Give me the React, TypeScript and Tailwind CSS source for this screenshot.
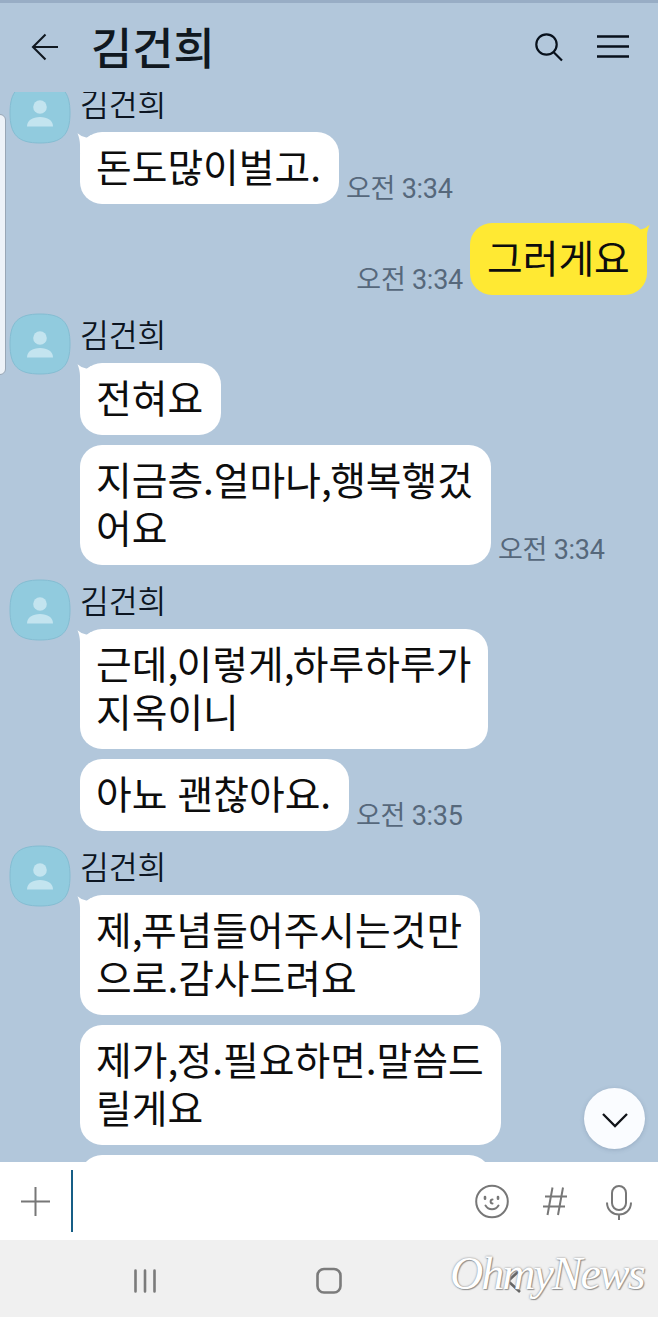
import type { ReactNode } from "react";

function Avatar() {
  return (
    <svg className="h-[62px] w-[62px] shrink-0" viewBox="0 0 62 62">
      <path
        d="M31 1C53 1 61 9 61 31S53 61 31 61 1 53 1 31 9 1 31 1Z"
        fill="#91cbde"
        stroke="#84bdd2"
        strokeWidth="1"
      />
      <circle cx="31" cy="25" r="6.8" fill="#c3e4ef" />
      <path d="M18 44.500c0-6 5.500-9.500 13-9.500s13 3.500 13 9.500Z" fill="#c3e4ef" />
    </svg>
  );
}

function Tail({ mine }: { mine?: boolean }) {
  return mine ? (
    <svg className="absolute -right-[3px] top-[1px] h-[20px] w-[24px]" viewBox="0 0 24 20">
      <path d="M10 3 13.500 5.200Q14.500 5.900 15.500 5.300Q20 4.300 23.500.8C22 5 21 8 21 12V20H4Z" fill="#ffe933" />
    </svg>
  ) : (
    <svg className="absolute -left-[3px] top-[1px] h-[20px] w-[24px]" viewBox="0 0 24 20">
      <path d="M14 2 10.500 4.200Q9.500 4.900 8.500 4.300Q4 3.500.500.300C2 4 3 8 3 12V20H20Z" fill="#fff" />
    </svg>
  );
}

type BubbleProps = {
  lines: string[];
  width: string;
  time?: string;
  tail?: boolean;
};

function Time({ children }: { children: ReactNode }) {
  return (
    <span className="mb-[-1px] whitespace-pre text-[27px] leading-[32px] font-normal tracking-[-0.250px] text-[#56687b] font-[Roboto,'Noto_Sans_CJK_KR',sans-serif]">
      {children}
    </span>
  );
}

function Line({ text }: { text: string }) {
  return (
    <p className="relative whitespace-pre text-[38.800px] leading-[47.500px] [word-spacing:1.500px]">
      {text.split(/(,)/).map((part, i) =>
        part === "," ? (
          <span key={i} className="tracking-[-1.600px]">
            ,
          </span>
        ) : (
          part
        ),
      )}
    </p>
  );
}

function Bubble({ lines, width, time, tail }: BubbleProps) {
  return (
    <div className="flex items-end gap-[7px]">
      <div
        className={`relative rounded-[22px] bg-white pt-[10px] pl-[16px] ${width} ${
          lines.length > 1 ? "h-[120px]" : "h-[72px]"
        }`}
      >
        {tail && <Tail />}
        {lines.map((line) => (
          <Line key={line} text={line} />
        ))}
      </div>
      {time && <Time>{time}</Time>}
    </div>
  );
}

function Group({ bubbles, className }: { bubbles: BubbleProps[]; className: string }) {
  return (
    <section className={`flex gap-[9px] pl-[9px] ${className}`}>
      <Avatar />
      <div className="flex flex-col gap-[10px]">
        <h2 className="-mb-[10px] h-[50px] text-[31.300px] leading-[42px] font-[350] text-[#0c1522]">김건희</h2>
        {bubbles.map((b, i) => (
          <Bubble key={i} {...b} tail={i === 0} />
        ))}
      </div>
    </section>
  );
}

export default function App() {
  return (
    <div className="flex h-[1317px] w-[658px] flex-col overflow-hidden bg-[#b2c7db] text-[#0d0d0d] font-['Noto_Sans_CJK_KR',sans-serif]">
      <header className="flex h-[92px] shrink-0 items-center border-t-[3px] border-[#98adc5] pb-[2px] pl-[31px] pr-[28px]">
        <svg className="h-[28px] w-[28px]" viewBox="0 0 28 28" fill="none" stroke="#101820" strokeWidth="2.100">
          <path d="M27 14H2M14.500 1.500 2 14l12.500 12.500" />
        </svg>
        <h1 className="-mt-[1px] ml-[32px] flex-1 text-[44.800px] leading-[60px] font-medium text-[#101820]">김건희</h1>
        <svg className="h-[30px] w-[30px]" viewBox="0 0 30 30" fill="none" stroke="#08111c" strokeWidth="2.200">
          <circle cx="12.500" cy="12.500" r="10.200" />
          <path d="m19.500 20 8.500 8.500" />
        </svg>
        <svg className="ml-[32px] h-[30px] w-[34px]" viewBox="0 0 34 30" stroke="#08111c" strokeWidth="2.300">
          <path d="M1 4.500h32M1 14.500h32M1 24.500h32" />
        </svg>
      </header>

      <main className="relative h-[1070px] shrink-0 overflow-hidden">
        <div className="-mt-[10px] flex flex-col">
          <Group
            className="h-[141px]"
            bubbles={[{ lines: ["돈도많이벌고."], width: "w-[259px]", time: "오전 3:34" }]}
          />
          <div className="flex h-[90px] items-start justify-end pr-[11px]">
            <div className="flex items-end gap-[7px]">
              <Time>오전 3:34</Time>
              <div className="relative h-[72px] w-[177px] rounded-[22px] bg-[#ffe933] pt-[10px] pl-[17px]">
                <Tail mine />
                <Line text="그러게요" />
              </div>
            </div>
          </div>
          <Group
            className="h-[266px]"
            bubbles={[
              { lines: ["전혀요"], width: "w-[141px]" },
              { lines: ["지금층.얼마나,행복햏겄", "어요"], width: "w-[411px]", time: "오전 3:34" },
            ]}
          />
          <Group
            className="h-[266px]"
            bubbles={[
              { lines: ["근데,이렇게,하루하루가", "지옥이니"], width: "w-[408px]" },
              { lines: ["아뇨 괜찮아요."], width: "w-[269px]", time: "오전 3:35" },
            ]}
          />
          <Group
            className=""
            bubbles={[
              { lines: ["제,푸념들어주시는것만", "으로.감사드려요"], width: "w-[400px]" },
              { lines: ["제가,정.필요하면.말씀드", "릴게요"], width: "w-[421px]" },
              { lines: [""], width: "w-[411px]" },
            ]}
          />
        </div>
        <div className="absolute -left-[4px] top-[22px] h-[261px] w-[10px] rounded-r-[6px] border border-[#98a6b5] bg-[#edf2f8]" />
        <button className="absolute right-[13px] bottom-[13px] flex h-[61px] w-[61px] items-center justify-center rounded-full bg-[#fafcff] shadow-[0_1px_4px_rgba(70,90,120,0.25)]">
          <svg className="mt-[3px] h-[16px] w-[28px]" viewBox="0 0 28 16" fill="none" stroke="#101318" strokeWidth="2.300">
            <path d="m2 2 12 12L26 2" />
          </svg>
        </button>
      </main>

      <div className="flex h-[78px] shrink-0 items-center bg-white pl-[20px] pr-[25px]">
        <svg className="h-[31px] w-[31px]" viewBox="0 0 31 31" stroke="#777" strokeWidth="2">
          <path d="M15.500 1v29M1 15.500h29" />
        </svg>
        <div className="ml-[20px] h-[62px] w-[2px] bg-[#165e86]" />
        <div className="flex-1" />
        <svg className="h-[36px] w-[36px]" viewBox="0 0 36 36" fill="none" stroke="#777" strokeWidth="2" strokeLinecap="round">
          <circle cx="18" cy="18.500" r="15.800" />
          <path d="M11 14v1.800M24 14v1.800" strokeWidth="2.600" />
          <path d="M18.500 16.500c-2.500 0-2.500 4 0 4M11.500 22.500c3 5 10 5 13 0" />
        </svg>
        <svg className="ml-[32px] h-[30px] w-[26px]" viewBox="0 0 26 30" fill="none" stroke="#777" strokeWidth="2">
          <path d="m10.500 1.500-5 27.500M21 1.500l-5 27.500M3 10.500h22M1 20.500h22" />
        </svg>
        <svg className="mt-[4px] ml-[37px] h-[36px] w-[28px]" viewBox="0 0 28 36" fill="none" stroke="#777" strokeWidth="2">
          <rect x="7" y="1" width="14" height="24" rx="7" />
          <path d="M2 17.500c0 16 24 16 24 0M14 29.500V35" />
        </svg>
      </div>

      <nav className="relative flex h-[77px] shrink-0 items-center bg-[#f0f0f0] pt-[4px] pl-[132px]">
        <svg className="h-[26px] w-[26px]" viewBox="0 0 26 26" stroke="#7b7b7b" strokeWidth="2.600" strokeLinecap="round">
          <path d="M3.500 2.500v21M13 2.500v21M22.500 2.500v21" />
        </svg>
        <svg className="ml-[157px] h-[28px] w-[28px]" viewBox="0 0 28 28" fill="none" stroke="#7b7b7b" strokeWidth="2.600">
          <rect x="2.500" y="2" width="23" height="23.500" rx="6.500" />
        </svg>
        <svg className="ml-[160px] h-[26px] w-[20px]" viewBox="0 0 20 26" fill="none" stroke="#666" strokeWidth="2.600">
          <path d="M17 2 5 13l12 11" />
        </svg>
        <span className="absolute left-[450px] top-[8px] text-[46px] leading-[52px] tracking-[-2px] italic text-white [text-shadow:0_0_2px_#777,1px_1px_1px_#999] font-['Z003','URW_Chancery_L','Liberation_Serif',serif]">
          OhmyNews
        </span>
      </nav>
    </div>
  );
}
